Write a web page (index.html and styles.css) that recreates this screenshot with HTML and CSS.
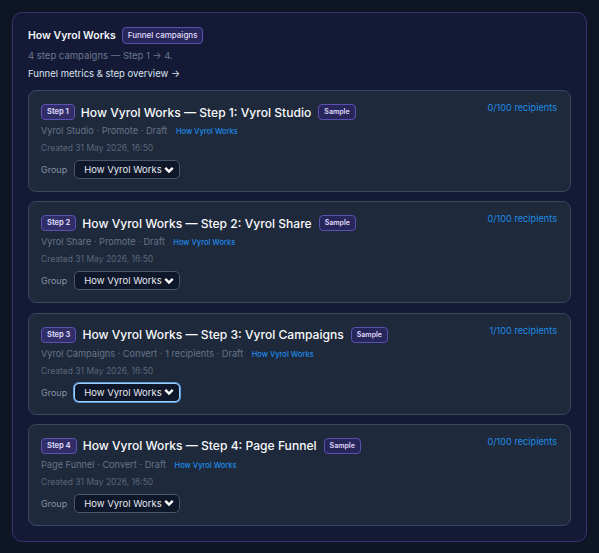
FILE: index.html
```html
<!DOCTYPE html>
<html lang="en">
<head>
    <meta charset="UTF-8">
    <meta name="viewport" content="width=device-width, initial-scale=1.0">
    <title>How Vyrol Works</title>
    <link rel="stylesheet" href="styles.css">
</head>
<body>
    <div class="panel">
        <div class="panel-head">
            <span class="panel-title">How Vyrol Works</span>
            <span class="tag">Funnel campaigns</span>
        </div>
        <div class="panel-sub">4 step campaigns — Step 1 → 4.</div>
        <a class="panel-link" href="#">Funnel metrics &amp; step overview →</a>

        <div class="cards">
            <div class="card">
                <div class="card-top">
                    <div class="card-heading">
                        <span class="step">Step 1</span>
                        <span class="card-title">How Vyrol Works — Step 1: Vyrol Studio</span>
                        <span class="tag">Sample</span>
                    </div>
                    <span class="recipients">0/100 recipients</span>
                </div>
                <div class="meta">Vyrol Studio · Promote · Draft <span class="group-link">How Vyrol Works</span></div>
                <div class="created">Created 31 May 2026, 16:50</div>
                <div class="group-row">
                    <label class="group-label">Group</label>
                    <select class="group-select">
                        <option>How Vyrol Works</option>
                    </select>
                </div>
            </div>

            <div class="card">
                <div class="card-top">
                    <div class="card-heading">
                        <span class="step">Step 2</span>
                        <span class="card-title">How Vyrol Works — Step 2: Vyrol Share</span>
                        <span class="tag">Sample</span>
                    </div>
                    <span class="recipients">0/100 recipients</span>
                </div>
                <div class="meta">Vyrol Share · Promote · Draft <span class="group-link">How Vyrol Works</span></div>
                <div class="created">Created 31 May 2026, 16:50</div>
                <div class="group-row">
                    <label class="group-label">Group</label>
                    <select class="group-select">
                        <option>How Vyrol Works</option>
                    </select>
                </div>
            </div>

            <div class="card">
                <div class="card-top">
                    <div class="card-heading">
                        <span class="step">Step 3</span>
                        <span class="card-title">How Vyrol Works — Step 3: Vyrol Campaigns</span>
                        <span class="tag">Sample</span>
                    </div>
                    <span class="recipients">1/100 recipients</span>
                </div>
                <div class="meta">Vyrol Campaigns · Convert · 1 recipients · Draft <span class="group-link">How Vyrol Works</span></div>
                <div class="created">Created 31 May 2026, 16:50</div>
                <div class="group-row">
                    <label class="group-label">Group</label>
                    <select class="group-select focused">
                        <option>How Vyrol Works</option>
                    </select>
                </div>
            </div>

            <div class="card">
                <div class="card-top">
                    <div class="card-heading">
                        <span class="step">Step 4</span>
                        <span class="card-title">How Vyrol Works — Step 4: Page Funnel</span>
                        <span class="tag">Sample</span>
                    </div>
                    <span class="recipients">0/100 recipients</span>
                </div>
                <div class="meta">Page Funnel · Convert · Draft <span class="group-link">How Vyrol Works</span></div>
                <div class="created">Created 31 May 2026, 16:50</div>
                <div class="group-row">
                    <label class="group-label">Group</label>
                    <select class="group-select">
                        <option>How Vyrol Works</option>
                    </select>
                </div>
            </div>
        </div>
    </div>
</body>
</html>
```

FILE: styles.css
```css
* {
    margin: 0;
    padding: 0;
    box-sizing: border-box;
}
body {
    background: #0e1626;
    color: #e5e7eb;
    font-family: Inter, "Noto Sans", sans-serif;
    padding: 12px;
}
.panel {
    width: 575px;
    height: 530px;
    background: #141a35;
    border: 1px solid #3a3170;
    border-radius: 10px;
    padding: 14px 15px;
}
.panel-head {
    display: flex;
    align-items: center;
    gap: 6px;
    height: 17px;
}
.panel-title {
    font-size: 10.5px;
    font-weight: 600;
    color: #f1f5f9;
}
.tag {
    display: inline-block;
    font-size: 8px;
    font-weight: 500;
    color: #e0dcfb;
    background: #27265a;
    border: 1px solid #5b50b0;
    border-radius: 4px;
    padding: 3px 5px;
    line-height: 9px;
}
.panel-sub {
    margin-top: 5px;
    font-size: 9.5px;
    line-height: 14px;
    color: #6b7890;
}
.panel-link {
    display: block;
    margin-top: 4px;
    font-size: 9.5px;
    line-height: 14px;
    color: #dbe2ee;
    text-decoration: none;
}
.cards {
    margin-top: 9px;
    display: flex;
    flex-direction: column;
    gap: 9.3px;
}
.card {
    background: #1e293b;
    border: 1px solid #3a475c;
    border-radius: 8px;
    padding: 13px 13px 11px 12px;
    height: 102px;
}
.card-top {
    display: flex;
    justify-content: space-between;
    align-items: flex-start;
}
.card-heading {
    display: flex;
    align-items: center;
    gap: 6px;
    height: 16px;
}
.step {
    font-size: 7.5px;
    font-weight: 700;
    color: #d6d2f6;
    background: #312d66;
    border: 1px solid #5d52b3;
    border-radius: 4px;
    padding: 3px 5px;
    line-height: 8px;
}
.card-title {
    font-size: 12.1px;
    font-weight: 500;
    color: #f8fafc;
}
.card .tag {
    font-size: 7px;
    font-weight: 600;
    padding: 3px 5px;
    line-height: 8px;
    margin-left: 1px;
}
.recipients {
    font-size: 9.2px;
    color: #1e8ce6;
    line-height: 12px;
    margin-top: -2px;
}
.meta {
    margin-top: 4px;
    font-size: 9.2px;
    line-height: 14px;
    color: #667489;
}
.group-link {
    font-size: 7.5px;
    font-weight: 500;
    color: #1f8ae8;
    margin-left: 6px;
}
.created {
    margin-top: 3px;
    font-size: 8.5px;
    line-height: 12px;
    color: #59677c;
}
.group-row {
    margin-top: 6px;
    display: flex;
    align-items: center;
    gap: 7px;
}
.group-label {
    font-size: 9px;
    color: #8793a6;
}
.group-select {
    appearance: none;
    width: 106px;
    height: 19px;
    background: #0f172a url("data:image/svg+xml;utf8,<svg xmlns='http://www.w3.org/2000/svg' width='10' height='8' viewBox='0 0 10 8'><path d='M1.3 1.8 L5 5.6 L8.7 1.8' fill='none' stroke='white' stroke-width='2.4'/></svg>") no-repeat right 5px center;
    border: 1px solid #4a5568;
    border-radius: 5px;
    color: #e5e9f0;
    font-family: Inter, "Noto Sans", sans-serif;
    font-size: 9.5px;
    padding: 0 0 0 9px;
    outline: none;
}
.group-select.focused {
    border-color: #a5d0fb;
    box-shadow: 0 0 0 1px #5a9ee0;
}
```
